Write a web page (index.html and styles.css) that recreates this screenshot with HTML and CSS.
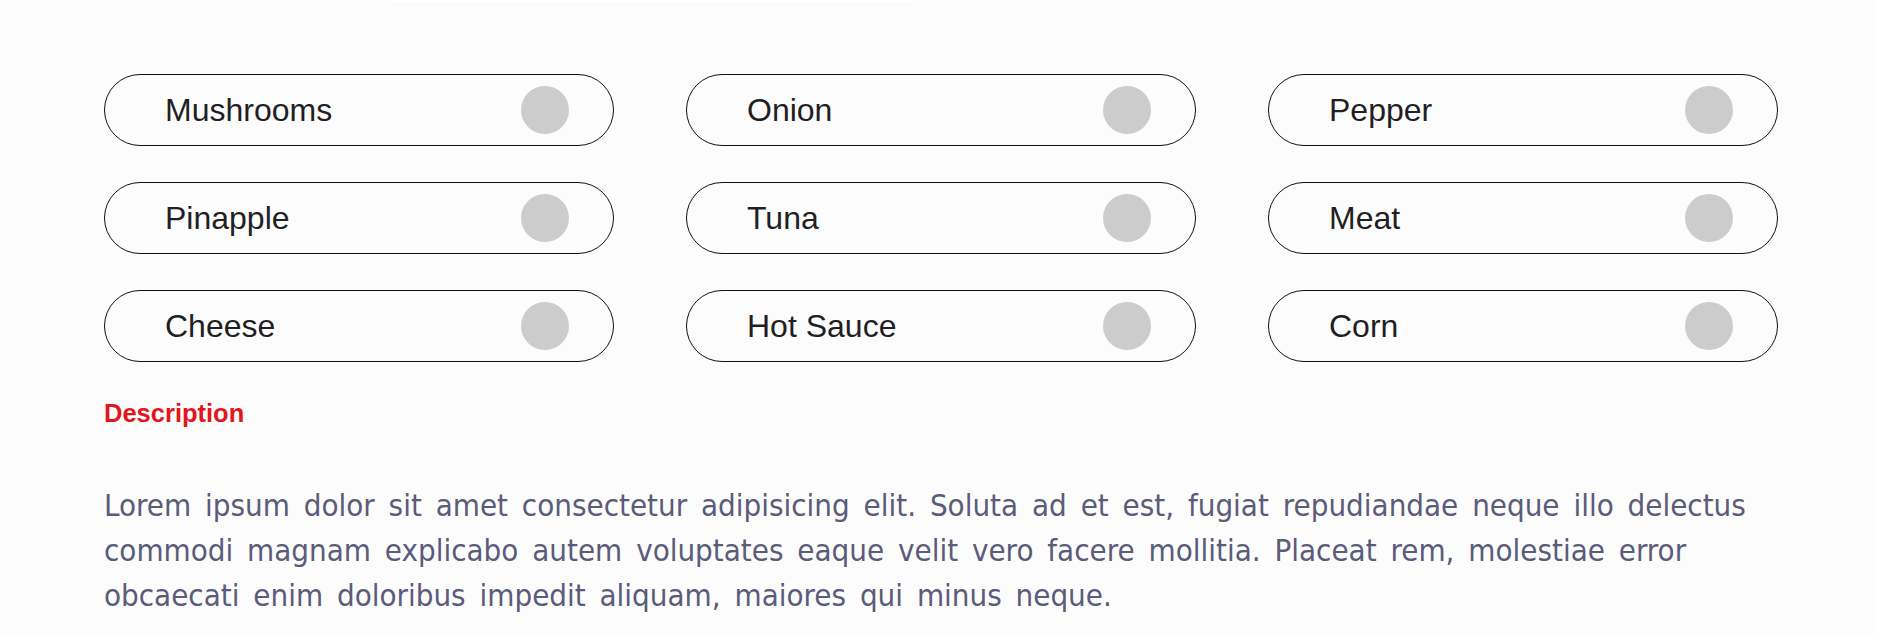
FILE: index.html
```html
<!DOCTYPE html>
<html lang="en">
<head>
<meta charset="utf-8">
<title>Toppings</title>
<link rel="stylesheet" href="styles.css">
</head>
<body>
<div class="top-strip"></div>
<main class="page">
  <section class="toppings">
    <label class="pill"><span class="pill-label">Mushrooms</span><span class="knob"></span></label>
    <label class="pill"><span class="pill-label">Onion</span><span class="knob"></span></label>
    <label class="pill"><span class="pill-label">Pepper</span><span class="knob"></span></label>
    <label class="pill"><span class="pill-label">Pinapple</span><span class="knob"></span></label>
    <label class="pill"><span class="pill-label">Tuna</span><span class="knob"></span></label>
    <label class="pill"><span class="pill-label">Meat</span><span class="knob"></span></label>
    <label class="pill"><span class="pill-label">Cheese</span><span class="knob"></span></label>
    <label class="pill"><span class="pill-label">Hot Sauce</span><span class="knob"></span></label>
    <label class="pill"><span class="pill-label">Corn</span><span class="knob"></span></label>
  </section>
  <h2 class="desc-title">Description</h2>
  <p class="desc-text">Lorem ipsum dolor sit amet consectetur adipisicing elit. Soluta ad et est, fugiat repudiandae neque illo delectus commodi magnam explicabo autem voluptates eaque velit vero facere mollitia. Placeat rem, molestiae error obcaecati enim doloribus impedit aliquam, maiores qui minus neque.</p>
</main>
</body>
</html>
```
FILE: styles.css
```css
html, body {
  margin: 0;
  padding: 0;
  background: #fcfcfc;
}

body {
  font-family: "Liberation Sans", Arial, sans-serif;
  color: #1f1f24;
}

.top-strip {
  margin-left: 389px;
  width: 527px;
  height: 2px;
  background: #ffffff;
}

.page {
  padding: 72px 99px 0 104px;
}

.toppings {
  display: grid;
  grid-template-columns: repeat(3, 510px);
  column-gap: 72px;
  row-gap: 36px;
}

.pill {
  box-sizing: border-box;
  height: 72px;
  border: 1px solid #111111;
  border-radius: 36px;
  padding: 0 44px 0 60px;
  display: flex;
  align-items: center;
  justify-content: space-between;
}

.pill-label {
  font-size: 32px;
  color: #1f1f24;
}

.knob {
  width: 48px;
  height: 48px;
  border-radius: 50%;
  background: #cccccc;
}

.desc-title {
  margin: 37px 0 0;
  font-size: 25.5px;
  font-weight: bold;
  color: #e1161e;
  line-height: 29px;
}

.desc-text {
  margin: 55px 0 0;
  font-family: "DejaVu Sans Condensed", "DejaVu Sans", sans-serif;
  font-stretch: condensed;
  font-size: 31px;
  line-height: 45px;
  word-spacing: 5px;
  color: #5b5b7a;
}
```
